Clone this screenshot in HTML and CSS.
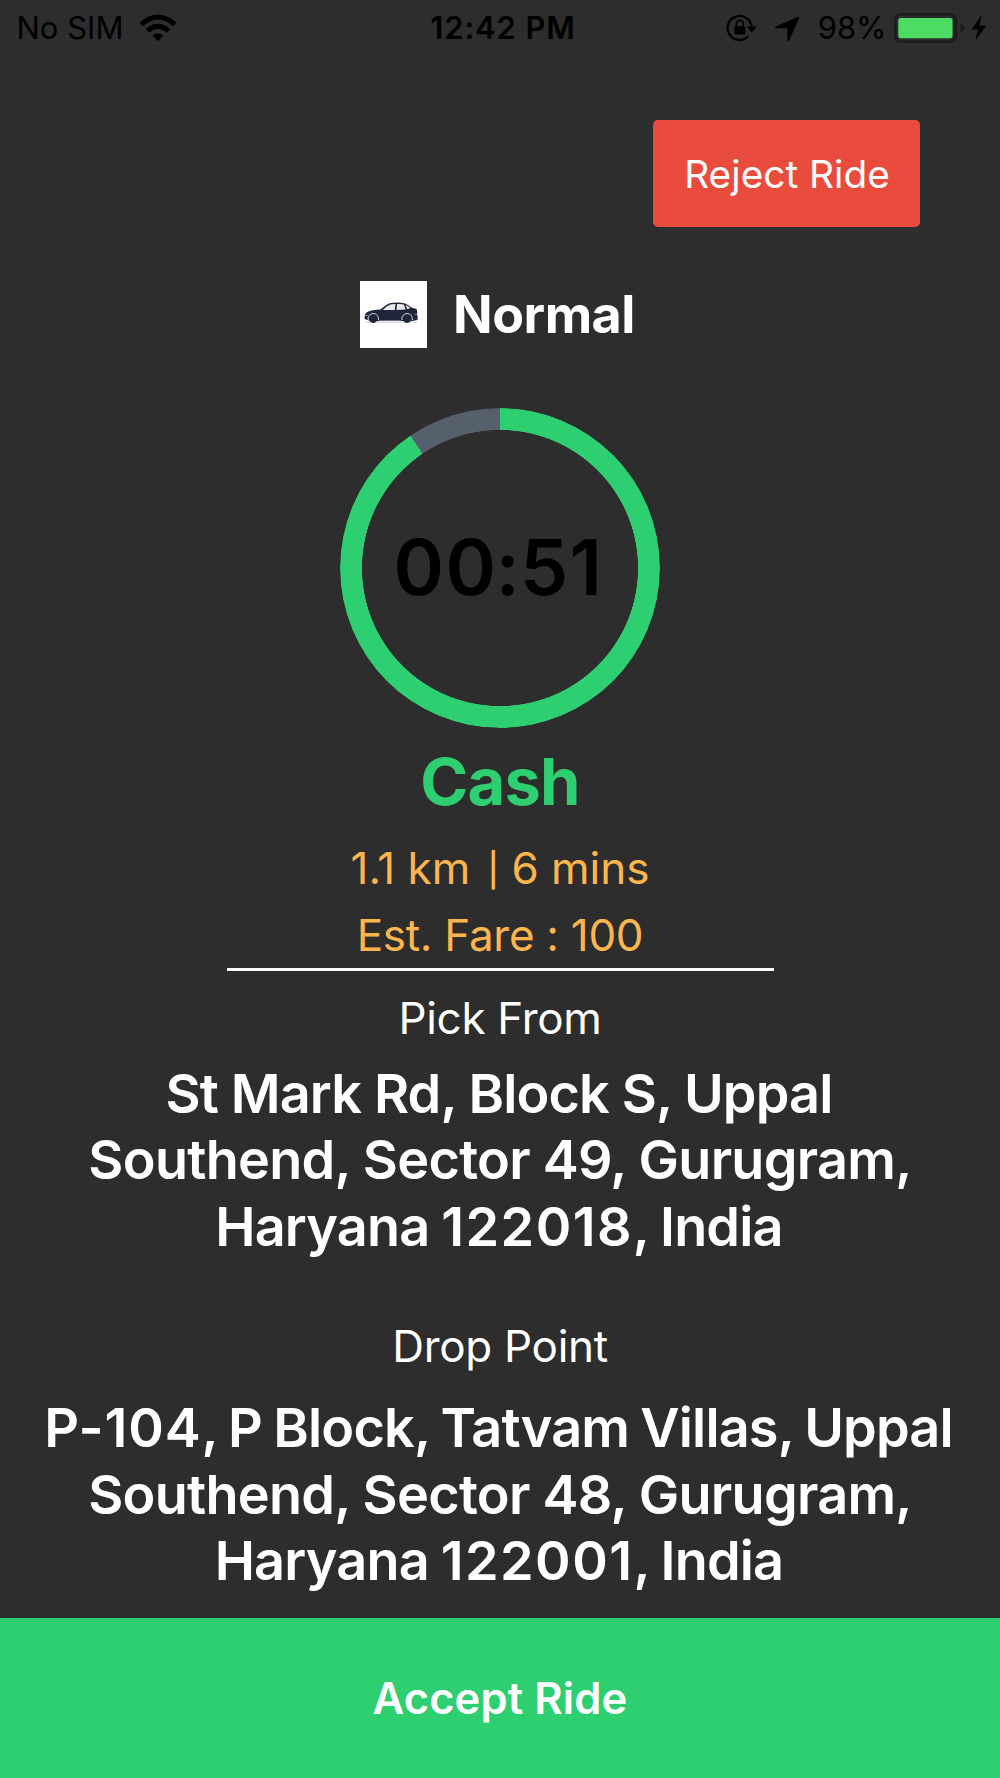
FILE: index.html
```html
<!DOCTYPE html>
<html lang="en">
<head>
<meta charset="utf-8">
<title>Ride request</title>
<link rel="stylesheet" href="styles.css">
</head>
<body>
<div class="screen">
  <header class="status">
    <div class="status-left">
      <span class="carrier">No SIM</span>
      <svg class="wifi" width="38" height="28" viewBox="0 0 38 28">
        <path d="M19 27.2 13.6 21.6Q19 16.8 24.4 21.6Z"/>
        <path class="arc" d="M8.4 17Q19 7.600 29.600 17M2.200 10.300Q19-4.300 35.800 10.300"/>
      </svg>
    </div>
    <div class="status-time">12:42 PM</div>
    <div class="status-right">
      <svg class="lock" width="31" height="28" viewBox="0 0 31 28">
        <path class="line" d="M25.600 14A12 12 0 1 0 22.300 22.200"/>
        <path d="M20.600 12.600h10.200l-5.100 5.800z"/>
        <rect x="8.400" y="12.200" width="10.800" height="8.200" rx="1"/>
        <path class="shackle" d="M10.400 12.600V9.700a3.400 3.400 0 0 1 6.800 0V12.600"/>
      </svg>
      <svg class="arrow" width="26" height="26" viewBox="0 0 26 26">
        <path d="M23.200 1Q25.600 0 25 2.600L15.200 24.300Q14 26 13.400 24V13.200Q13.400 12.300 12.500 12.300L2 12.100Q0 11.700 1.600 10.600Z"/>
      </svg>
      <span class="percent">98%</span>
      <svg class="battery" width="73" height="32" viewBox="0 0 73 32">
        <rect class="shell" x="2.300" y="2.300" width="60.400" height="27.400" rx="6"/>
        <rect class="charge" x="5.300" y="6" width="54.200" height="20.300" rx="2.500"/>
        <path class="nub" d="M67.300 11.200Q71.300 13 71.300 16T67.300 20.800Z"/>
      </svg>
      <svg class="bolt" width="16" height="26" viewBox="0 0 16 26">
        <path d="M10.800 0 .6 14.600H7L4.300 25.600 15.400 10.600H8.500Z"/>
      </svg>
    </div>
  </header>

  <div class="toolbar">
    <button class="reject">Reject Ride</button>
  </div>

  <div class="vehicle">
    <svg class="vehicle-icon" width="67" height="67" viewBox="14 17 204 204">
      <rect class="tile" x="14" y="17" width="204" height="204"/>
      <path class="shadow" d="M32 143H188"/>
      <path class="car" d="M28 133Q27 117 35 112Q50 104 76 104Q96 86 107 84Q130 81 149 85Q160 89 171 98L186 102Q189 106 188 119Q191 126 189 136L174 139H46Z"/>
      <path class="glass" d="M83 105Q96 91 109 88L122 87 120 105ZM127 87Q142 86 148 89L153 104 125 105ZM153 90Q161 93 167 99L158 103Z"/>
      <path class="arch" d="M39 136A16 16 0 1 1 70 136M142 136A16 16 0 1 1 173 136"/>
      <circle class="wheel" cx="54.500" cy="132" r="12.500"/>
      <circle class="wheel" cx="157.500" cy="132" r="12.500"/>
      <path class="trim" d="M74 138H138M30 122h8M181 119h8"/>
    </svg>
    <span class="vehicle-name">Normal</span>
  </div>

  <div class="timer">
    <span class="timer-text">00<span class="colon">:</span>51</span>
  </div>

  <div class="payment">Cash</div>
  <div class="trip">1.1 km <span class="bar">|</span> 6 mins</div>
  <div class="trip fare">Est. Fare : 100</div>
  <div class="divider"></div>

  <div class="label">Pick From</div>
  <div class="address">
    <div class="l1">St Mark Rd, Block S, Uppal</div>
    <div class="l2">Southend, Sector 49, Gurugram,</div>
    <div class="l3">Haryana <span class="pin">122018</span>, India</div>
  </div>

  <div class="label drop">Drop Point</div>
  <div class="address drop-address">
    <div class="l4"><span class="plot">P-104</span>, P Block, Tatvam Villas, Uppal</div>
    <div class="l2">Southend, Sector 48, Gurugram,</div>
    <div class="l3">Haryana <span class="pin">122001</span>, India</div>
  </div>

  <button class="accept">Accept Ride</button>
</div>
</body>
</html>
```
FILE: styles.css
```css
* { box-sizing: border-box; }

body {
  margin: 0;
  background: #2d2d2d;
  color: #fff;
  font-family: Inter, "Liberation Sans", sans-serif;
}

button {
  border: 0;
  margin: 0;
  color: #fff;
  font-family: inherit;
}

svg { display: block; flex: none; }

.screen {
  width: 1000px;
  height: 1778px;
  display: flex;
  flex-direction: column;
  overflow: hidden;
  background: #2d2d2d;
}

/* Status bar */
.status {
  height: 54px;
  flex: none;
  display: grid;
  grid-template-columns: 1fr auto 1fr;
  align-items: center;
  color: #000;
  font-size: 31px;
  line-height: 56px;
  white-space: nowrap;
}
.status-left { display: flex; align-items: center; padding-left: 16.500px; }
.status-time { font-weight: 600; letter-spacing: 0.85px; padding-left: 6px; }
.status-right { display: flex; align-items: center; justify-content: flex-end; padding-right: 12px; }
.wifi { margin-left: 15.500px; }
.wifi .arc { fill: none; stroke: #000; stroke-width: 5; }
.lock .line { fill: none; stroke: #000; stroke-width: 2.200; }
.lock .shackle { fill: none; stroke: #000; stroke-width: 1.800; }
.arrow { margin: 2px 17.500px 0 17px; }
.percent { letter-spacing: 0; }
.battery { margin-left: 6.500px; }
.battery .shell { fill: none; stroke: #1d1d1d; stroke-width: 2.800; }
.battery .charge { fill: #4cdc64; }
.battery .nub { fill: #1d1d1d; }
.bolt { margin-left: 5px; margin-right: 1px; }

/* Reject action */
.toolbar {
  flex: none;
  display: flex;
  justify-content: flex-end;
  padding: 66px 80px 0 0;
}
.reject {
  width: 267px;
  height: 107px;
  padding: 0 0 1px 1px;
  border-radius: 5px;
  background: #e94c3d;
  font-size: 38.8px;
  letter-spacing: 0;
}

/* Vehicle type */
.vehicle {
  flex: none;
  height: 67px;
  margin-top: 54px;
  padding-right: 5px;
  display: flex;
  justify-content: center;
  align-items: center;
  gap: 26px;
}
.vehicle-name { font-size: 52px; font-weight: 700; line-height: 68px; letter-spacing: -0.5px; }
.tile { fill: #fff; }
.car, .wheel { fill: #20263a; }
.glass { fill: #e9ebef; }
.arch { fill: none; stroke: #d5d8de; stroke-width: 3; }
.trim { fill: none; stroke: #b9bdc6; stroke-width: 2; }
.shadow { fill: none; stroke: #d9dadd; stroke-width: 4; }

/* Countdown ring */
.timer {
  flex: none;
  align-self: center;
  width: 320px;
  height: 320px;
  margin-top: 59.500px;
  padding: 0 3px 0 0;
  display: flex;
  align-items: center;
  justify-content: center;
  position: relative;
}
.timer::before {
  content: "";
  position: absolute;
  inset: 0;
  border-radius: 50%;
  background: conic-gradient(#2ecf71 0 325.900deg, #56606d 325.900deg);
  -webkit-mask: radial-gradient(circle, transparent 137.700px, #000 138.300px);
  mask: radial-gradient(circle, transparent 137.700px, #000 138.300px);
}
.timer-text { color: #000; font-size: 76.600px; font-weight: 600; line-height: 1; letter-spacing: 1.500px; }
.timer-text .colon { margin: 0 -1.500px 0 -2px; }

/* Trip summary */
.payment, .trip, .label, .address { flex: none; text-align: center; white-space: nowrap; }
.payment {
  margin-top: 15.500px;
  color: #2ecf71;
  font-size: 65px;
  font-weight: 700;
  line-height: 78px;
  letter-spacing: -0.8px;
}
.trip { color: #feb54d; font-size: 44px; line-height: 66.500px; }
.payment + .trip { margin-top: 14px; }
.trip .bar { display: inline-block; padding: 0 0 0 5px; font-size: 33px; font-weight: 500; line-height: 1; vertical-align: 2px; }
.fare { letter-spacing: -0.29px; }
.divider {
  flex: none;
  align-self: center;
  width: 547px;
  height: 3px;
  margin-top: -0.500px;
  background: #fff;
}

/* Pick-up and drop-off */
.label { margin-top: 14.500px; font-size: 44px; line-height: 66px; letter-spacing: -0.3px; }
.address { margin-top: 9.500px; font-size: 54px; font-weight: 600; line-height: 66.670px; }
.l1 { letter-spacing: -0.86px; padding-right: 2px; }
.l2 { letter-spacing: -0.72px; }
.l3 { letter-spacing: -0.8px; word-spacing: -1px; padding-right: 2px; }
.l4 { letter-spacing: -0.85px; word-spacing: -1.500px; padding-right: 3px; }
.pin { letter-spacing: 1.4px; }
.plot { letter-spacing: 0.9px; }
.drop { margin-top: 52.500px; }
.drop-address { margin-top: 16px; }

/* Accept action */
.accept {
  flex: none;
  height: 160px;
  margin-top: auto;
  padding: 0;
  background: #2ecf71;
  font-size: 43.500px;
  font-weight: 600;
  letter-spacing: 0.12px;
}
```
